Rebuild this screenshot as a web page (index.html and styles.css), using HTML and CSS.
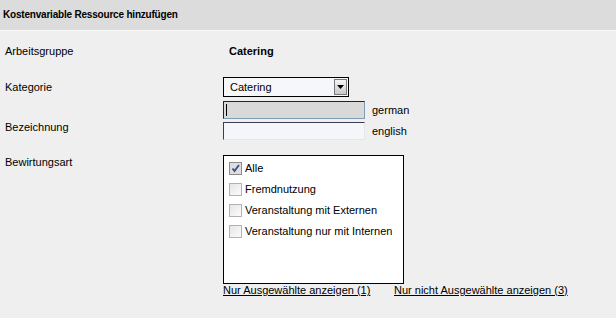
FILE: index.html
```html
<!DOCTYPE html>
<html lang="de">
<head>
    <meta charset="UTF-8">
    <title>Kostenvariable Ressource hinzufügen</title>
    <link rel="stylesheet" href="styles.css">
</head>
<body>
    <div class="header">Kostenvariable Ressource hinzufügen</div>

    <div class="form">
        <div class="row row-group">
            <div class="label">Arbeitsgruppe</div>
            <div class="value strong">Catering</div>
        </div>

        <div class="row row-category">
            <div class="label">Kategorie</div>
            <div class="select">
                <span class="select-text">Catering</span>
                <span class="select-button">
                    <svg width="7" height="4" viewBox="0 0 7 4"><path d="M0 0H7L3.5 4Z" fill="#000"/></svg>
                </span>
            </div>
        </div>

        <div class="row row-name">
            <div class="label label-name">Bezeichnung</div>
            <div class="inputs">
                <div class="lang-line">
                    <div class="text-input focused"><span class="caret"></span></div>
                    <span class="lang">german</span>
                </div>
                <div class="lang-line">
                    <div class="text-input"></div>
                    <span class="lang">english</span>
                </div>
            </div>
        </div>

        <div class="row row-type">
            <div class="label label-type">Bewirtungsart</div>
            <div class="type-col">
                <div class="check-list">
                    <div class="check-item">
                        <span class="cb checked">
                            <svg width="11" height="11" viewBox="0 0 11 11"><path d="M2.5 5.5L4.5 8L9 2" fill="none" stroke="#3a4a8e" stroke-width="1.8"/></svg>
                        </span>
                        Alle
                    </div>
                    <div class="check-item"><span class="cb"></span>Fremdnutzung</div>
                    <div class="check-item"><span class="cb"></span>Veranstaltung mit Externen</div>
                    <div class="check-item"><span class="cb"></span>Veranstaltung nur mit Internen</div>
                </div>
                <div class="links">
                    <a href="#" class="link-first">Nur Ausgewählte anzeigen (1)</a>
                    <a href="#">Nur nicht Ausgewählte anzeigen (3)</a>
                </div>
            </div>
        </div>
    </div>
</body>
</html>
```

FILE: styles.css
```css
body {
    margin: 0;
    font-family: "Liberation Sans", Arial, sans-serif;
    font-size: 11px;
    line-height: 13px;
    color: #000;
    background-color: #efefef;
}

.header {
    height: 30px;
    line-height: 30px;
    padding-left: 3px;
    font-size: 10px;
    font-weight: bold;
    letter-spacing: -0.2px;
    background-color: #dcdcdc;
    border-bottom: 1px solid #f9f9f9;
}

.form {
    padding-left: 5px;
}

.row {
    display: flex;
}

.label {
    width: 218px;
    flex-shrink: 0;
}

.strong {
    font-weight: bold;
    padding-left: 6px;
}

.row-group {
    margin-top: 14px;
}

.row-category {
    margin-top: 19px;
    align-items: center;
}

.select {
    display: flex;
    align-items: center;
    width: 124px;
    height: 18px;
    border: 1px solid #000;
    background-color: #f6f7fb;
}

.select-text {
    flex: 1;
    padding-left: 6px;
}

.select-button {
    display: flex;
    align-items: center;
    justify-content: center;
    width: 11px;
    height: 14px;
    margin-right: 1px;
    border: 1px solid #7a7a7a;
    background: linear-gradient(#f4f4f4, #c9c9c9);
}

.row-name {
    margin-top: 4px;
}

.label-name {
    padding-top: 20px;
}

.inputs {
    display: flex;
    flex-direction: column;
    gap: 3px;
}

.lang-line {
    display: flex;
    align-items: center;
}

.text-input {
    position: relative;
    width: 140px;
    height: 16px;
    border: 1px solid #e6e6ea;
    border-top-color: #3c3c50;
    border-left-color: #3c3c50;
    background-color: #f5f6fa;
}

.text-input.focused {
    background-color: #d9d9d9;
    border-color: #7f9db9;
    border-top-color: #0a246a;
    border-left-color: #0a246a;
}

.caret {
    position: absolute;
    left: 2px;
    top: 2px;
    width: 1px;
    height: 12px;
    background-color: #000;
}

.lang {
    margin-left: 7px;
}

.row-type {
    margin-top: 15px;
}

.label-type {
    padding-top: 1px;
}

.check-list {
    box-sizing: border-box;
    width: 181px;
    height: 129px;
    padding-top: 6px;
    border: 1px solid #000;
    background-color: #fff;
}

.check-item {
    display: flex;
    align-items: center;
    height: 13px;
    margin-bottom: 8px;
    padding-left: 5px;
}

.cb {
    display: flex;
    align-items: center;
    justify-content: center;
    width: 11px;
    height: 11px;
    margin-right: 3px;
    border: 1px solid #b2b2b2;
    background: linear-gradient(135deg, #e6e6e6, #fbfbfb);
}

.cb.checked {
    border-color: #8c8c8c;
    background: #dedede;
}

.links {
    display: flex;
}

.links a {
    color: #000;
    text-decoration: underline;
}

.link-first {
    width: 171px;
}
```
